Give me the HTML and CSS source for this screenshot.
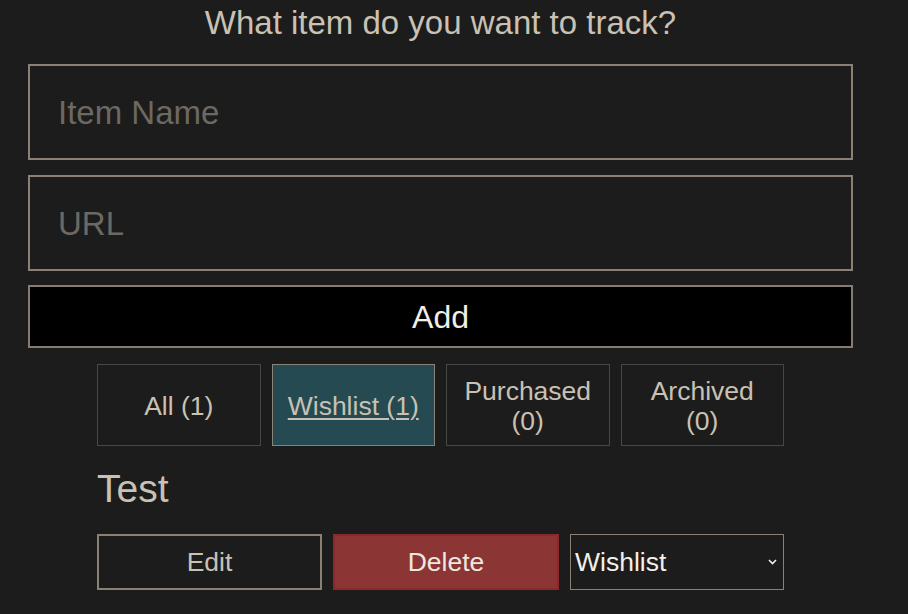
FILE: index.html
```html
<!DOCTYPE html>
<html lang="en">
<head>
<meta charset="utf-8">
<title>Item tracker</title>
<link rel="stylesheet" href="styles.css">
</head>
<body>
<main class="app">
  <h1 class="title">What item do you want to track?</h1>
  <form class="form">
    <input class="field" type="text" placeholder="Item Name">
    <input class="field" type="text" placeholder="URL">
    <button class="add" type="button">Add</button>
  </form>
  <section class="content">
    <div class="tabs">
      <button class="tab" type="button">All (1)</button>
      <button class="tab active" type="button">Wishlist (1)</button>
      <button class="tab" type="button">Purchased (0)</button>
      <button class="tab" type="button">Archived (0)</button>
    </div>
    <h2 class="item-name">Test</h2>
    <div class="actions">
      <button class="btn btn-edit" type="button">Edit</button>
      <button class="btn btn-delete" type="button">Delete</button>
      <div class="select-wrap">
        <select class="status">
          <option>Wishlist</option>
          <option>Purchased</option>
          <option>Archived</option>
        </select>
        <svg class="chevron" width="9" height="6" viewBox="0 0 9 6" aria-hidden="true"><path d="M1 1 L4.5 4.5 L8 1" fill="none" stroke="#f3efe9" stroke-width="1.6"/></svg>
      </div>
    </div>
  </section>
</main>
</body>
</html>
```
FILE: styles.css
```css
html, body {
  margin: 0;
  background: #1b1c1b;
}
body {
  font-family: "Liberation Sans", Arial, sans-serif;
  color: #c9c1b4;
}
.app {
  width: 825px;
  margin-left: 28px;
  padding-top: 4px;
}
.title {
  margin: 0 0 22px;
  font-size: 33px;
  line-height: 38px;
  font-weight: normal;
  text-align: center;
  color: #c9c1b4;
}
.form {
  display: flex;
  flex-direction: column;
  gap: 14.5px;
  margin: 0;
}
.field {
  display: block;
  box-sizing: border-box;
  width: 100%;
  height: 96px;
  margin: 0;
  padding: 2px 28px 0;
  border: 2px solid #8b8173;
  border-radius: 0;
  background: transparent;
  color: #c9c1b4;
  font-family: inherit;
  font-size: 33px;
  line-height: 38px;
  outline: none;
}
.field::placeholder {
  color: #6c6862;
}
.add {
  box-sizing: border-box;
  width: 100%;
  height: 63px;
  margin: 0;
  border: 2px solid #857c70;
  border-radius: 0;
  background: #000;
  color: #f2eee8;
  font-family: inherit;
  font-size: 32px;
  line-height: 37px;
  padding: 2px 0 0;
}
.content {
  width: 687px;
  margin: 16px auto 0;
}
.tabs {
  display: grid;
  grid-template-columns: repeat(4, 1fr);
  gap: 11px;
}
.tab {
  box-sizing: border-box;
  min-height: 82px;
  margin: 0;
  padding: 11px 12px 9px;
  border: 1px solid #474845;
  border-radius: 0;
  background: transparent;
  color: #c9c1b4;
  font-family: inherit;
  font-size: 26.5px;
  line-height: 30px;
  text-align: center;
}
.tab.active {
  background: #264a52;
  border-color: #898276;
  text-decoration: underline;
  text-underline-offset: 3px;
  text-decoration-thickness: 1.5px;
}
.item-name {
  margin: 21px 0 23px;
  font-size: 39px;
  line-height: 44px;
  font-weight: normal;
  color: #c9c1b4;
}
.actions {
  display: grid;
  grid-template-columns: 225px 226px 1fr;
  gap: 11px;
  height: 56px;
}
.btn {
  box-sizing: border-box;
  margin: 0;
  padding: 0;
  border-radius: 0;
  font-family: inherit;
  font-size: 26.5px;
  line-height: 30px;
}
.btn-edit {
  border: 2px solid #8b8173;
  background: transparent;
  color: #c9c1b4;
}
.btn-delete {
  border: 2px solid #8c272c;
  background: #8b3535;
  color: #efe8e0;
}
.select-wrap {
  position: relative;
}
.status {
  box-sizing: border-box;
  width: 100%;
  height: 100%;
  margin: 0;
  padding: 0 24px 0 4px;
  border: 1px solid #8b8173;
  border-radius: 0;
  background: #1b1c1b;
  color: #f3efe9;
  font-family: inherit;
  font-size: 26.5px;
  -webkit-appearance: none;
  appearance: none;
  outline: none;
}
.chevron {
  position: absolute;
  right: 7px;
  top: 25px;
  pointer-events: none;
}
```
